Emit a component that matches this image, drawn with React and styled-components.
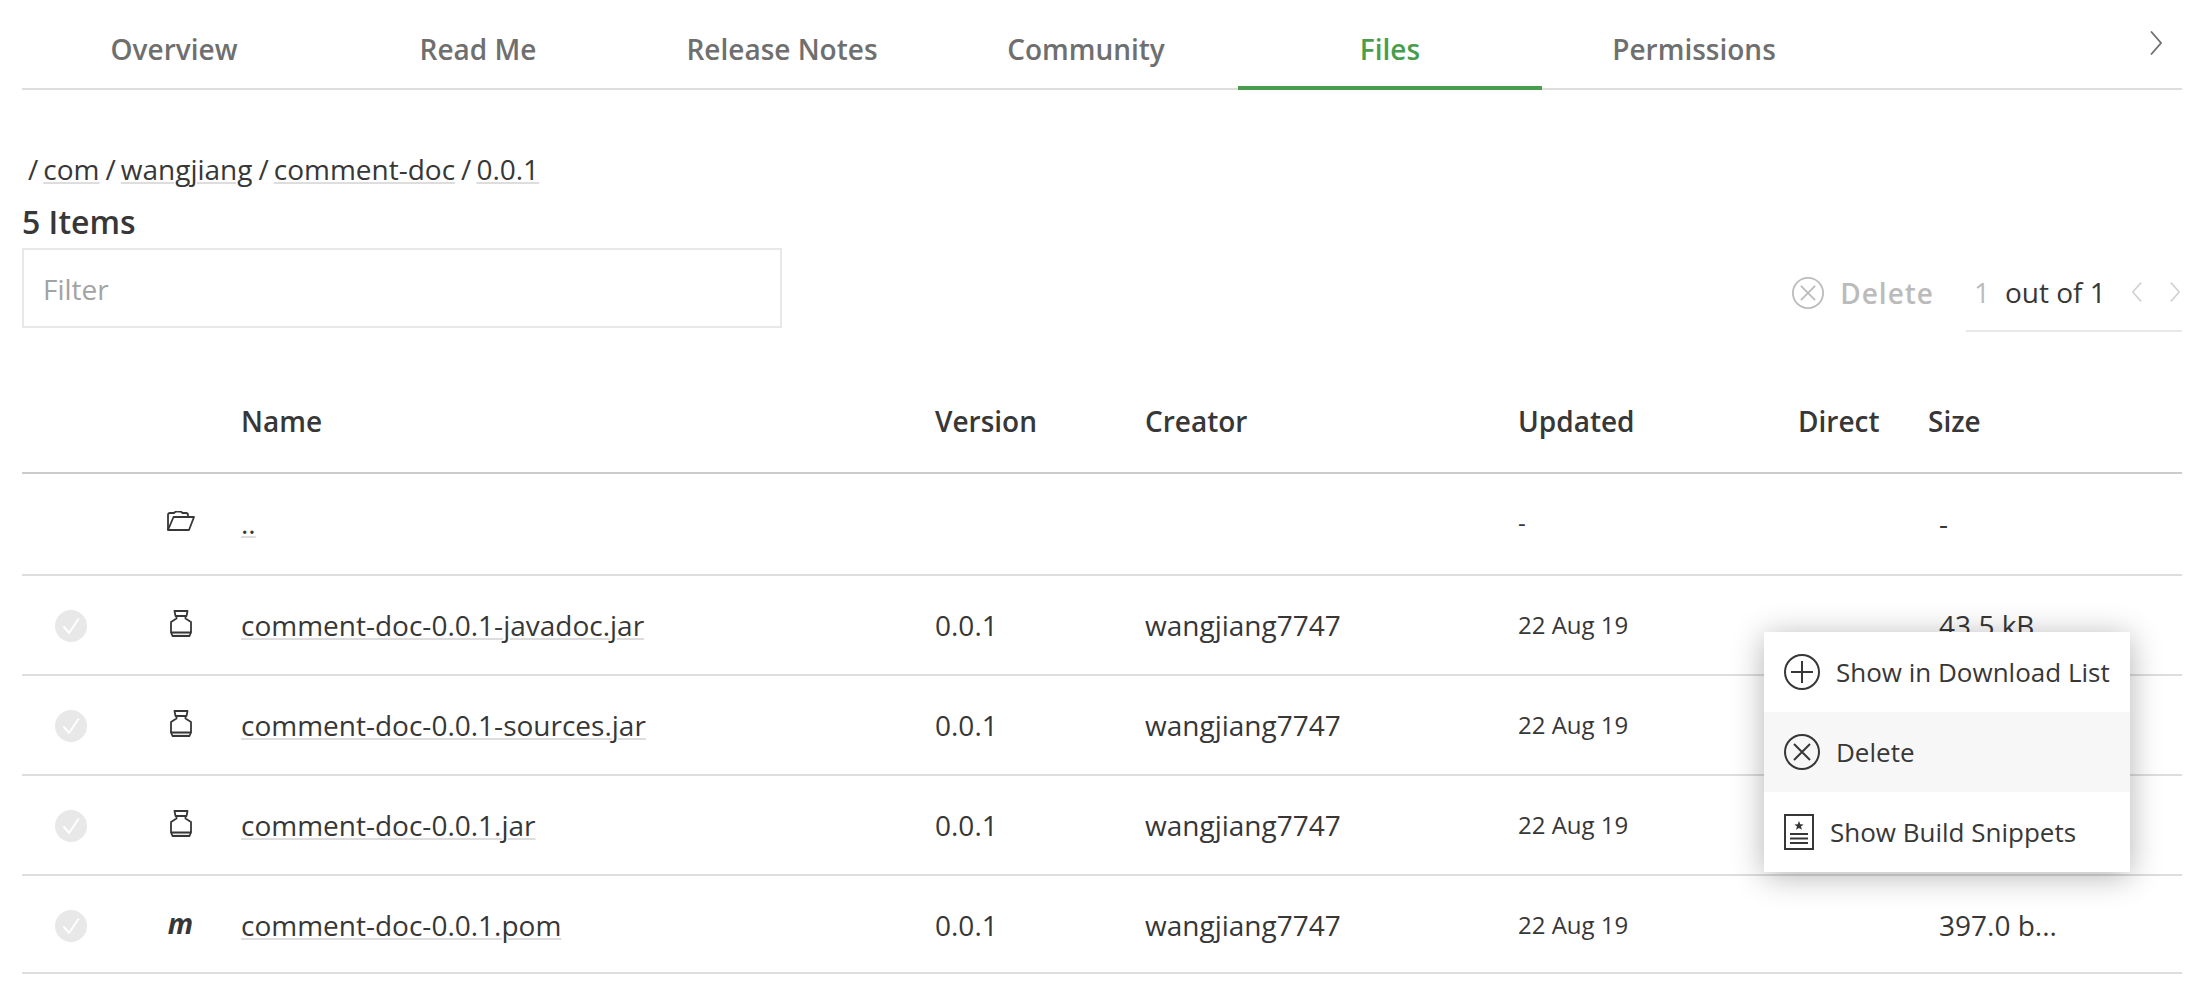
import React, { useState } from 'react'
import styled, { createGlobalStyle } from 'styled-components'

const tabs = ['Overview', 'Read Me', 'Release Notes', 'Community', 'Files', 'Permissions']

const crumbs = ['com', 'wangjiang', 'comment-doc', '0.0.1']

const files = [
    {'name': '..',
    'icon': 'folder',
    'updated': '-',
    'size': '-'},
    {'name': 'comment-doc-0.0.1-javadoc.jar',
    'icon': 'jar',
    'version': '0.0.1',
    'creator': 'wangjiang7747',
    'updated': '22 Aug 19',
    'size': '43.5 kB',
    'menu': true},
    {'name': 'comment-doc-0.0.1-sources.jar',
    'icon': 'jar',
    'version': '0.0.1',
    'creator': 'wangjiang7747',
    'updated': '22 Aug 19'},
    {'name': 'comment-doc-0.0.1.jar',
    'icon': 'jar',
    'version': '0.0.1',
    'creator': 'wangjiang7747',
    'updated': '22 Aug 19'},
    {'name': 'comment-doc-0.0.1.pom',
    'icon': 'pom',
    'version': '0.0.1',
    'creator': 'wangjiang7747',
    'updated': '22 Aug 19',
    'size': '397.0 b...'},
]

const Chevron = ({ width, height, left }) => (
    <svg width={width} height={height} viewBox="0 0 12 24" fill="none" stroke="currentColor" strokeWidth="1.8" aria-hidden="true">
        <path d={left ? 'M11 .5 1 12l10 11.5' : 'M1 .5 11 12 1 23.5'} />
    </svg>
)

const CrossCircle = ({ size }) => (
    <svg width={size} height={size} viewBox="0 0 36 36" fill="none" stroke="currentColor" strokeWidth="2" aria-hidden="true">
        <circle cx="18" cy="18" r="17" />
        <path d="m10 10 16 16M26 10 10 26" />
    </svg>
)

const PlusCircle = () => (
    <svg width="36" height="36" viewBox="0 0 36 36" fill="none" stroke="currentColor" strokeWidth="2" aria-hidden="true">
        <circle cx="18" cy="18" r="17" />
        <path d="M18 7v22M7 18h22" />
    </svg>
)

const Snippet = () => (
    <svg width="30" height="36" viewBox="0 0 30 36" fill="none" stroke="currentColor" strokeWidth="2" aria-hidden="true">
        <path d="M1 1h28v34H1zM6 20h18M6 24.5h18M6 29h18" />
        <path d="m15 7 1.300 3.200 3.300.2-2.600 2.100.9 3.300-2.900-1.800-2.900 1.800.9-3.300-2.600-2.100 3.300-.2z" fill="currentColor" stroke="none" />
    </svg>
)

const Folder = () => (
    <svg width="28" height="20" viewBox="0 0 28 20" fill="none" stroke="currentColor" strokeWidth="1.8" strokeLinejoin="round" aria-hidden="true">
        <path d="M1 19V4q0-2 2-2h4l1.500-1.300h5.500L15.500 2H19q2 0 2 2v2" />
        <path d="M6.500 6H27L22 19H1z" />
    </svg>
)

const Jar = () => (
    <svg width="22" height="27" viewBox="0 0 22 27" fill="none" stroke="currentColor" strokeWidth="1.800" strokeLinejoin="round" aria-hidden="true">
        <path d="M1 22.500h20l-1.500 3.500h-17z" fill="#e8e8e8" />
        <path d="M4.500 1h13L16.500 6h-11zM6.500 6v2.500L1 12v10.500M15.500 6v2.500L21 12v10.500" />
    </svg>
)

const FileIcon = ({ icon }) => {
    if (icon === 'folder') return <Folder />
    if (icon === 'jar') return <Jar />
    return <Maven>m</Maven>
}

const Check = ({ name }) => (
    <CheckLabel>
        <input type="checkbox" aria-label={`Select ${name}`} />
        <svg width="32" height="32" viewBox="0 0 32 32" fill="none" aria-hidden="true">
            <circle cx="16" cy="16" r="16" />
            <path d="m9 17 5 6L23.500 9" stroke="#fff" strokeWidth="2" strokeLinecap="round" strokeLinejoin="round" />
        </svg>
    </CheckLabel>
)

const FileMenu = () => (
    <Menu role="menu">
        <MenuItem role="menuitem"><PlusCircle />Show in Download List</MenuItem>
        <MenuItem role="menuitem" $active><CrossCircle size={36} />Delete</MenuItem>
        <MenuItem role="menuitem"><Snippet />Show Build Snippets</MenuItem>
    </Menu>
)

const App = () => {
    const [tab, setTab] = useState('Files')
    const [filter, setFilter] = useState('')
    return (
        <Page>
            <GlobalStyle />
            <TabBar>
                {tabs.map(name => (
                    <Tab key={name} $active={tab === name} onClick={() => setTab(name)}>
                        {name}
                    </Tab>
                ))}
                <NextTabs aria-label="More tabs"><Chevron width={12} height={24} /></NextTabs>
            </TabBar>
            <Crumbs aria-label="Path">
                {crumbs.map(crumb => (
                    <React.Fragment key={crumb}>
                        <Slash>/</Slash>
                        <FileLink href="#">{crumb}</FileLink>
                    </React.Fragment>
                ))}
            </Crumbs>
            <Count>5 Items</Count>
            <Toolbar>
                <Filter
                    placeholder="Filter"
                    aria-label="Filter"
                    value={filter}
                    onChange={e => setFilter(e.target.value)} />
                <DeleteButton disabled><CrossCircle size={32} />Delete</DeleteButton>
                <Pager>
                    <PageInput aria-label="Page" defaultValue="1" disabled />
                    <span>out of 1</span>
                    <PagerButtons>
                        <PagerButton aria-label="Previous page" disabled><Chevron width={10} height={20} left /></PagerButton>
                        <PagerButton aria-label="Next page" disabled><Chevron width={10} height={20} /></PagerButton>
                    </PagerButtons>
                </Pager>
            </Toolbar>
            <Table>
                <colgroup>
                    <Col $width={98} />
                    <Col $width={121} />
                    <Col />
                    <Col $width={210} />
                    <Col $width={373} />
                    <Col $width={280} />
                    <Col $width={130} />
                    <Col $width={254} />
                </colgroup>
                <thead>
                    <tr>
                        <Th />
                        <Th />
                        <Th>Name</Th>
                        <Th>Version</Th>
                        <Th>Creator</Th>
                        <Th>Updated</Th>
                        <Th>Direct</Th>
                        <Th>Size</Th>
                    </tr>
                </thead>
                <tbody>
                    {files.filter(file => file.name.includes(filter)).map(file => (
                        <Row key={file.name}>
                            <Td $center>{file.icon !== 'folder' && <Check name={file.name} />}</Td>
                            <IconTd><IconBox><FileIcon icon={file.icon} /></IconBox></IconTd>
                            <Td><FileLink href="#">{file.name}</FileLink></Td>
                            <Td>{file.version}</Td>
                            <Td>{file.creator}</Td>
                            <Td $small>{file.updated}</Td>
                            <Td />
                            <SizeTd>
                                {file.size}
                                {file.menu && <FileMenu />}
                            </SizeTd>
                        </Row>
                    ))}
                </tbody>
            </Table>
        </Page>
    )
}

export default App

const GlobalStyle = createGlobalStyle`
    * {
        box-sizing: border-box;
    }
    body {
        margin: 0;
        background: #fff;
        color: #373737;
        font-family: 'Open Sans', 'Noto Sans', sans-serif;
        font-size: 28px;
        line-height: 40px;
    }
    button, input {
        font: inherit;
        color: inherit;
        background: none;
        border: 0;
        padding: 0;
        margin: 0;
    }
    svg {
        display: block;
        flex: none;
    }
`

const Page = styled.main`
    padding: 0 18px 18px 22px;
`

const TabBar = styled.nav`
    display: grid;
    grid-template-columns: repeat(6, 304fr) 336fr;
    height: 90px;
    box-shadow: inset 0 -2px #ddd;
`

const Tab = styled.button`
    padding-top: 12px;
    font-weight: 600;
    color: ${props => props.$active ? '#489e4c' : '#6f6f6f'};
    border-bottom: 4px solid ${props => props.$active ? '#489e4c' : 'transparent'};
    border-radius: 4px 4px 0 0;
`

const NextTabs = styled.button`
    justify-self: end;
    padding: 0 20px 4px;
    color: #6f6f6f;
`

const Crumbs = styled.nav`
    display: flex;
    padding: 59px 6px 0;
`

const Slash = styled.span`
    margin-right: 5px;
    a + & {
        margin-left: 6px;
    }
`

const FileLink = styled.a`
    color: inherit;
    text-decoration: underline 2px #ddd;
    text-underline-offset: 2px;
`

const Count = styled.h2`
    margin: 11px 0 0;
    font-size: 32px;
    font-weight: 600;
    line-height: 44px;
`

const Toolbar = styled.div`
    display: flex;
    align-items: flex-start;
    padding-top: 4px;
`

const Filter = styled.input`
    flex: 0 1 760px;
    min-width: 0;
    height: 80px;
    margin-right: auto;
    padding: 2px 19px 0;
    border: 2px solid #e8e8e8;
    &::placeholder {
        color: #a3a3a3;
        opacity: 1;
    }
`

const DeleteButton = styled.button`
    display: flex;
    align-items: center;
    gap: 16px;
    height: 84px;
    padding-top: 6px;
    margin-right: 32px;
    font-weight: 600;
    letter-spacing: 1px;
    color: #bbb;
`

const Pager = styled.div`
    display: flex;
    align-items: center;
    width: 216px;
    height: 84px;
    padding: 6px 2px 0 8px;
    border-bottom: 2px solid #e8e8e8;
`

const PageInput = styled.input`
    width: 31px;
    color: #bbb;
`

const PagerButtons = styled.div`
    display: flex;
    gap: 28px;
    margin-left: auto;
    color: #ccd0d3;
`

const PagerButton = styled.button`
    display: flex;
`

const Table = styled.table`
    width: 100%;
    margin-top: 40px;
    table-layout: fixed;
    border-collapse: separate;
    border-spacing: 0;
`

const Col = styled.col`
    width: ${props => props.$width ? `${props.$width}px` : 'auto'};
`

const Th = styled.th`
    height: 102px;
    padding: 0 0 2px;
    font-weight: 600;
    text-align: left;
    border-bottom: 2px solid #ccc;
`

const Td = styled.td`
    height: 100px;
    padding: 29px 0 0;
    vertical-align: top;
    white-space: nowrap;
    text-align: ${props => props.$center ? 'center' : 'left'};
    font-size: ${props => props.$small ? '24px' : '28px'};
    border-bottom: 2px solid #ddd;
`

const IconTd = styled(Td)`
    padding-top: 27px;
`

const SizeTd = styled(Td)`
    position: relative;
    padding-left: 11px;
`

const Row = styled.tr`
    &:first-child td {
        height: 102px;
    }
    &:last-child td {
        height: 98px;
    }
`

const CheckLabel = styled.label`
    display: inline-grid;
    place-items: center;
    padding-top: 5px;
    vertical-align: top;
    cursor: pointer;
    input, svg {
        grid-area: 1 / 1;
    }
    input {
        opacity: 0;
    }
    circle {
        fill: #e8e8e8;
    }
    input:checked + svg circle {
        fill: #489e4c;
    }
`

const IconBox = styled.div`
    display: flex;
    justify-content: center;
    align-items: center;
    height: 40px;
`

const Maven = styled.b`
    font-style: italic;
`

const Menu = styled.div`
    position: absolute;
    top: 56px;
    right: 52px;
    z-index: 1;
    width: 366px;
    background: #fff;
    box-shadow: 0 4px 30px rgba(0, 0, 0, 0.3);
`

const MenuItem = styled.button`
    display: flex;
    align-items: center;
    gap: 16px;
    width: 100%;
    height: 80px;
    padding: 0 20px;
    font-size: 26px;
    background: ${props => props.$active ? '#f7f7f7' : '#fff'};
`
